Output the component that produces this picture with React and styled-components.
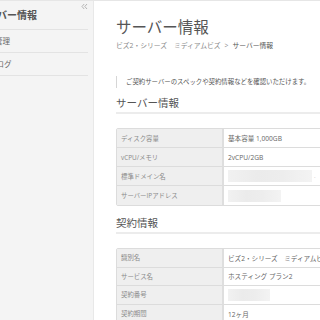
import React from "react";
import styled, { createGlobalStyle } from "styled-components";

const Global = createGlobalStyle`
  html, body { margin: 0; padding: 0; background: #fff; overflow: hidden; }
  body { font-family: "Open Sans", "Noto Sans CJK JP", sans-serif; }
  #root { width: 320px; height: 320px; }
`;

const Page = styled.div`
  display: flex;
  width: 320px;
  height: 320px;
  border-top: 1px solid #e6e6e6;
  box-sizing: border-box;
  overflow: hidden;
`;

const Sidebar = styled.aside`
  flex: 0 0 93px;
  background: #f4f4f4;
  border-right: 1px solid #e8e8e8;
  display: flex;
  flex-direction: column;
  position: relative;
  overflow: hidden;
`;

const Collapse = styled.div`
  position: absolute;
  top: 2px;
  right: 5px;
  width: 7px;
  height: 7px;
  line-height: 0;
  color: #b5b5b5;
  svg { display: block; }
`;

const SideHead = styled.div`
  margin-left: -23px;
  height: 28px;
  line-height: 28px;
  font-size: 10px;
  font-weight: 700;
  color: #555;
  white-space: nowrap;
  border-bottom: 1px solid #e3e3e3;
  margin-right: 5px;
`;

const SideItem = styled.div`
  margin-left: ${(p) => p.$shift}px;
  margin-right: 5px;
  height: 22px;
  line-height: 22px;
  font-size: 7.5px;
  color: #666;
  white-space: nowrap;
  border-bottom: 1px solid #e3e3e3;
`;

const Main = styled.main`
  flex: 1;
  padding: 16px 0 0 22px;
  overflow: hidden;
  display: flex;
  flex-direction: column;
  min-width: 0;
`;

const Title = styled.h1`
  margin: 0;
  font-size: 15.5px;
  line-height: 21px;
  font-weight: 400;
  color: #555;
  white-space: nowrap;
`;

const Crumbs = styled.div`
  margin-top: 3px;
  font-size: 6.8px;
  line-height: 10px;
  color: #8a8a8a;
  white-space: nowrap;
  display: flex;
  gap: 4px;
`;

const Crumb = styled.span`
  color: ${(p) => (p.$current ? "#555" : "#8a8a8a")};
`;

const Notice = styled.p`
  margin: 25px 0 0;
  border-left: 1px solid #d6d6d6;
  padding-left: 9px;
  font-size: 6.4px;
  line-height: 12px;
  color: #555;
  white-space: nowrap;
`;

const SectionTitle = styled.h2`
  margin: ${(p) => p.$mt}px 0 0;
  padding-bottom: 2px;
  font-size: 10.5px;
  line-height: 14px;
  font-weight: 400;
  color: #555;
  border-bottom: 2px solid #ececec;
  white-space: nowrap;
`;

const Table = styled.div`
  margin-top: 14px;
  width: 260px;
  border: 1px solid #dcdcdc;
  border-radius: 2px;
  display: grid;
  grid-template-columns: 107px 1fr;
`;

const Label = styled.div`
  height: ${(p) => p.$h}px;
  box-sizing: border-box;
  background: #efefef;
  border-right: 2px solid #dedede;
  border-bottom: ${(p) => (p.$last ? "none" : "1px solid #dcdcdc")};
  padding-left: 4px;
  display: flex;
  align-items: center;
  font-size: 6.4px;
  color: #8a8a8a;
  white-space: nowrap;
`;

const Value = styled.div`
  height: ${(p) => p.$h}px;
  box-sizing: border-box;
  border-bottom: ${(p) => (p.$last ? "none" : "1px solid #dcdcdc")};
  padding-left: 4px;
  display: flex;
  align-items: center;
  font-size: 6.6px;
  color: #666;
  white-space: nowrap;
  overflow: hidden;
`;

const Redact = styled.span`
  display: block;
  height: 12px;
  background: linear-gradient(90deg, #f1f1f1 0%, #ebebeb 35%, #ededed 65%, #f3f3f3 100%);
  filter: blur(0.6px);
`;

const Tail = styled.span`
  margin-left: 2px;
  color: #bbb;
  font-size: 6px;
`;

function DataTable({ rows, h }) {
  return (
    <Table>
      {rows.map((r, i) => {
        const last = i === rows.length - 1;
        return (
          <React.Fragment key={i}>
            <Label $h={h} $last={last}>{r.label}</Label>
            <Value $h={h} $last={last}>
              {r.redact ? (
                <>
                  <Redact style={{ width: r.redact }} />
                  {r.tail && <Tail>{r.tail}</Tail>}
                </>
              ) : (
                r.value
              )}
            </Value>
          </React.Fragment>
        );
      })}
    </Table>
  );
}

const serverRows = [
  { label: "ディスク容量", value: "基本容量 1,000GB" },
  { label: "vCPU/メモリ", value: "2vCPU/2GB" },
  { label: "標準ドメイン名", redact: 84, tail: "." },
  { label: "サーバーIPアドレス", redact: 53 },
];

const contractRows = [
  { label: "識別名", value: "ビズ2・シリーズ　ミディアムビズ" },
  { label: "サービス名", value: "ホスティング プラン2" },
  { label: "契約番号", redact: 42 },
  { label: "契約期間", value: "12ヶ月" },
];

export default function App() {
  return (
    <>
      <Global />
      <Page>
        <Sidebar>
          <Collapse>
            <svg width="7" height="7" viewBox="0 0 7 7" fill="none" stroke="currentColor" strokeWidth="1">
              <path d="M3.2 1 L1 3.5 L3.2 6" />
              <path d="M6 1 L3.8 3.5 L6 6" />
            </svg>
          </Collapse>
          <SideHead>サーバー情報</SideHead>
          <SideItem $shift={-35}>サーバー管理</SideItem>
          <SideItem $shift={-33}>アクセスログ</SideItem>
        </Sidebar>
        <Main>
          <Title>サーバー情報</Title>
          <Crumbs>
            <Crumb>ビズ2・シリーズ　ミディアムビズ</Crumb>
            <Crumb>&gt;</Crumb>
            <Crumb $current>サーバー情報</Crumb>
          </Crumbs>
          <Notice>ご契約サーバーのスペックや契約情報などを確認いただけます。</Notice>
          <SectionTitle $mt={8}>サーバー情報</SectionTitle>
          <DataTable rows={serverRows} h={19} />
          <SectionTitle $mt={10}>契約情報</SectionTitle>
          <DataTable rows={contractRows} h={18.5} />
        </Main>
      </Page>
    </>
  );
}
